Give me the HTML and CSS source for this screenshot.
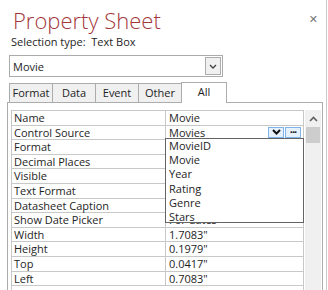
FILE: index.html
```html
<!DOCTYPE html>
<html lang="en">
<head>
    <meta charset="UTF-8">
    <title>Property Sheet</title>
    <link rel="stylesheet" href="styles.css">
</head>
<body>
    <div class="panel">
        <div class="head">
            <h1>Property Sheet</h1>
            <span class="close">&#x2715;</span>
        </div>
        <div class="seltype">Selection type:&nbsp; Text Box</div>
        <div class="combo">
            <span>Movie</span>
            <span class="combo-btn">
                <svg width="8" height="5" viewBox="0 0 8 5"><path d="M1 1 L4 4 L7 1" fill="none" stroke="#444" stroke-width="1.4"/></svg>
            </span>
        </div>
        <div class="tabs">
            <div class="tab">Format</div>
            <div class="tab">Data</div>
            <div class="tab">Event</div>
            <div class="tab">Other</div>
            <div class="tab active">All</div>
        </div>
        <div class="frame">
            <div class="grid">
                <div class="row"><div class="lbl">Name</div><div class="val">Movie</div></div>
                <div class="row"><div class="lbl">Control Source</div><div class="val">Movies
                    <span class="btns">
                        <span class="sbtn"><svg width="9" height="6" viewBox="0 0 9 6"><path d="M1 1 L4.5 4.5 L8 1" fill="none" stroke="#111" stroke-width="2"/></svg></span>
                        <span class="sbtn dots">&middot;&middot;&middot;</span>
                    </span>
                </div></div>
                <div class="row"><div class="lbl">Format</div><div class="val"></div></div>
                <div class="row"><div class="lbl">Decimal Places</div><div class="val"></div></div>
                <div class="row"><div class="lbl">Visible</div><div class="val"></div></div>
                <div class="row"><div class="lbl">Text Format</div><div class="val"></div></div>
                <div class="row"><div class="lbl">Datasheet Caption</div><div class="val"></div></div>
                <div class="row"><div class="lbl">Show Date Picker</div><div class="val">For dates</div></div>
                <div class="row"><div class="lbl">Width</div><div class="val">1.7083"</div></div>
                <div class="row"><div class="lbl">Height</div><div class="val">0.1979"</div></div>
                <div class="row"><div class="lbl">Top</div><div class="val">0.0417"</div></div>
                <div class="row"><div class="lbl">Left</div><div class="val">0.7083"</div></div>
                <ul class="drop">
                    <li>MovieID</li>
                    <li>Movie</li>
                    <li>Year</li>
                    <li>Rating</li>
                    <li>Genre</li>
                    <li>Stars</li>
                </ul>
            </div>
            <div class="scroll">
                <div class="arrow"><svg width="9" height="6" viewBox="0 0 9 6"><path d="M1 5 L4.5 1.5 L8 5" fill="none" stroke="#606060" stroke-width="1.6"/></svg></div>
                <div class="thumb"></div>
            </div>
        </div>
    </div>
</body>
</html>
```

FILE: styles.css
```css
body{
    margin: 0;
    font-family: 'Open Sans', sans-serif;
    font-size: 11px;
    color: #1e1e1e;
}
.panel{
    width: 327px;
    height: 290px;
    box-sizing: border-box;
    border-right: 1px solid #c8c8c8;
    overflow: hidden;
    background: white;
}
.head{
    display: flex;
    justify-content: space-between;
    align-items: flex-start;
    padding: 5px 8px 0 13px;
    height: 30px;
}
h1{
    margin: 0;
    font-weight: 300;
    font-size: 22px;
    line-height: 30px;
    color: #a4373a;
}
.close{
    color: #777;
    font-size: 11px;
    margin-top: 8px;
    font-family: 'DejaVu Sans', sans-serif;
}
.seltype{
    padding-left: 11px;
    height: 20px;
    line-height: 14px;
}
.combo{
    margin-left: 9px;
    width: 214px;
    height: 22px;
    box-sizing: border-box;
    border: 1px solid #ababab;
    display: flex;
    justify-content: space-between;
    align-items: center;
    padding: 0 1px 0 3px;
}
.combo-btn{
    width: 16px;
    height: 18px;
    box-sizing: border-box;
    border: 1px solid #acacac;
    background: #f0f0f0;
    display: flex;
    align-items: center;
    justify-content: center;
}
.tabs{
    display: flex;
    margin: 5px 0 0 9px;
    height: 20px;
    align-items: flex-end;
}
.tab{
    box-sizing: border-box;
    width: 44px;
    height: 19px;
    border: 1px solid #acacac;
    border-bottom: none;
    margin-right: -1px;
    background: #f0f0f0;
    text-align: center;
    line-height: 18px;
}
.tab.active{
    width: 46px;
    height: 21px;
    background: white;
    position: relative;
    z-index: 1;
    margin-bottom: -1px;
    line-height: 17px;
}
.frame{
    margin-left: 7px;
    width: 316px;
    box-sizing: border-box;
    border: 1px solid #acacac;
    display: flex;
    padding: 7px 0 0 3px;
    height: 200px;
}
.grid{
    width: 293px;
    border-left: 1px solid #c8c8c8;
    border-right: 1px solid #c8c8c8;
    border-top: 1px solid #c8c8c8;
    box-sizing: border-box;
    position: relative;
}
.row{
    display: flex;
    height: 14.6px;
    box-sizing: border-box;
    border-bottom: 1px solid #c8c8c8;
    line-height: 13px;
}
.lbl{
    width: 151px;
    padding-left: 2px;
    border-right: 1px solid #c8c8c8;
}
.val{
    flex: 1;
    padding-left: 3px;
    display: flex;
    justify-content: space-between;
}
.btns{
    display: flex;
    gap: 1px;
    padding-right: 2px;
}
.sbtn{
    width: 16px;
    height: 11px;
    box-sizing: border-box;
    border: 1px solid #7eb4ea;
    background: #e5f1fb;
    display: flex;
    align-items: center;
    justify-content: center;
    margin-top: 1px;
}
.dots{
    font-weight: bold;
    font-size: 11px;
    line-height: 6px;
    letter-spacing: -1px;
    color: #111;
}
.drop{
    position: absolute;
    left: 153px;
    top: 27px;
    width: 139px;
    margin: 0;
    padding: 0 0 0 3px;
    box-sizing: border-box;
    list-style: none;
    background: white;
    border: 1px solid #646464;
    height: 85px;
    line-height: 14.2px;
}
.scroll{
    width: 16px;
    margin-left: 1px;
    background: #f0f0f0;
}
.arrow{
    height: 17px;
    display: flex;
    align-items: center;
    justify-content: center;
}
.thumb{
    height: 16px;
    margin: 0 1px;
    background: #cdcdcd;
}
```
